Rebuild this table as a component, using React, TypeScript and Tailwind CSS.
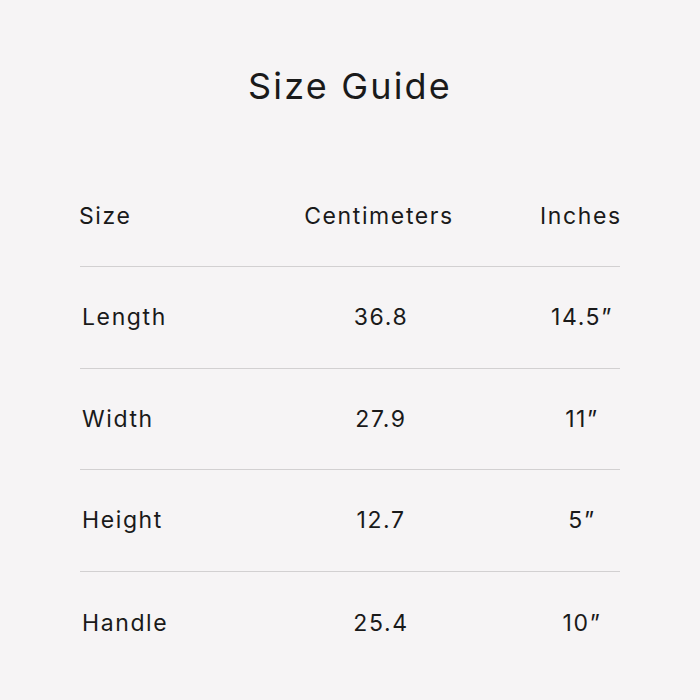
const rows = [
  { name: "Length", cm: "36.8", inch: "14.5”" },
  { name: "Width", cm: "27.9", inch: "11”" },
  { name: "Height", cm: "12.7", inch: "5”" },
  { name: "Handle", cm: "25.4", inch: "10”" },
];

export default function App() {
  return (
    <div
      className="w-[700px] h-[700px] bg-[#f6f4f5] text-[#1a1a1a] flex flex-col items-center overflow-hidden"
      style={{ fontFamily: "Inter, 'Noto Sans', sans-serif" }}
    >
      <h1 className="mt-[64px] h-[44px] leading-[44px] text-[36px] tracking-[0.06em]">Size Guide</h1>

      <div className="mt-[59px] w-[540px] flex flex-col">
        <div className="h-[100px] grid grid-cols-[200px_198px_142px] items-center text-[23px] tracking-[0.07em] border-b border-[#d2d0d1]">
          <div className="-ml-[1px]">Size</div>
          <div className="text-center">Centimeters</div>
          <div className="pl-[62px] text-center">Inches</div>
        </div>
        {rows.map((r, i) => (
          <div
            key={r.name}
            className={
              "h-[101.7px] grid grid-cols-[200px_198px_142px] items-center text-[23px] tracking-[0.07em] " +
              (i < rows.length - 1 ? "border-b border-[#d2d0d1]" : "")
            }
          >
            <div className="pl-[2px]">{r.name}</div>
            <div className="pl-[4px] text-center">{r.cm}</div>
            <div className="pl-[66px] text-center">{r.inch}</div>
          </div>
        ))}
      </div>
    </div>
  );
}
